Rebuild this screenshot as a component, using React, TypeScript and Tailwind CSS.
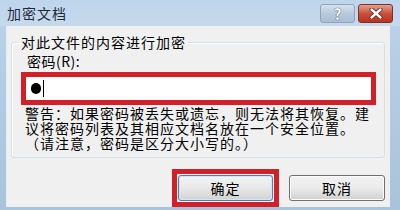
import React from 'react';

const font = { fontFamily: '"Noto Sans CJK SC", "Liberation Sans", sans-serif' };

const App: React.FC = () => {
    return (
        <div
            className="w-[400px] h-[210px] flex flex-col bg-gradient-to-b from-[#bcd3ea] to-[#a9c3da] text-black overflow-hidden"
            style={font}
        >
            {/* Title bar */}
            <div className="h-[27px] flex items-start justify-between pl-[7px] pr-[7px] bg-gradient-to-b from-[#bfd5ec] to-[#c6d9ed]">
                <span className="text-[14px] tracking-[1px] leading-[26px] text-[#1e2a36]">加密文档</span>
                <div className="flex gap-[3px] pt-[4px]">
                    <div className="w-[35px] h-[19px] rounded-[3px] border border-[#8ea4ba] bg-gradient-to-b from-[#d5e2ee] via-[#b8cadc] to-[#a9bfd4] flex items-center justify-center">
                        <span className="text-[15px] font-bold leading-none text-white [text-shadow:0_0_1px_#3a4e62,0_0_1px_#3a4e62]">?</span>
                    </div>
                    <div className="w-[35px] h-[19px] rounded-[3px] border border-[#7a3126] bg-gradient-to-b from-[#e3a08f] via-[#c9503c] to-[#b8321f] flex items-center justify-center">
                        <svg width="14" height="11" viewBox="0 0 14 11">
                            <path d="M2.5 1.5 L11.5 9.5 M11.5 1.5 L2.5 9.5" stroke="#5a1e14" strokeWidth="4" strokeLinecap="round" />
                            <path d="M2.5 1.5 L11.5 9.5 M11.5 1.5 L2.5 9.5" stroke="#ffffff" strokeWidth="2.4" strokeLinecap="round" />
                        </svg>
                    </div>
                </div>
            </div>

            {/* Client area */}
            <div className="flex-1 ml-[6px] mr-[10px] mb-[7px] bg-[#f0f0f0] border-l border-[#e4ecf4] flex flex-col px-[4px] pt-[7px]">
                <fieldset className="border border-[#d5dfe5] rounded-[3px] pl-[9px] pr-[5px] pb-[6px] mr-[1px] shadow-[inset_1px_1px_0_#ffffff]">
                    <legend className="-ml-[2px] px-[2px] text-[14px] tracking-[1px] leading-[18px]">对此文件的内容进行加密</legend>
                    <div className="text-[14px] tracking-[0.5px] leading-[16px] pl-[6px] mt-[2px]">密码(R):</div>
                    <div className="mt-[3px] h-[33px] border-[5px] border-[#d0212b] bg-white flex items-center pl-[5px] mr-[3px]">
                        <span className="w-[10px] h-[11px] rounded-full bg-black" />
                        <span className="ml-[2px] w-[1px] h-[17px] bg-black" />
                    </div>
                    <div className="text-[14px] tracking-[1px] leading-[15px] pl-[4px] mt-[1px] whitespace-nowrap">
                        <div>警告：如果密码被丢失或遗忘，则无法将其恢复。建</div>
                        <div>议将密码列表及其相应文档名放在一个安全位置。</div>
                        <div>（请注意，密码是区分大小写的。）</div>
                    </div>
                </fieldset>

                <div className="flex justify-end items-center gap-[10px] mt-[11px] pr-[1px]">
                    <div className="border-[5px] border-[#d0212b] p-[1px]">
                        <button className="w-[95px] h-[26px] rounded-[3px] border border-[#4d7fa8] bg-gradient-to-b from-[#f4f4f4] via-[#e8e8e8] to-[#d2d2d2] text-[14px] tracking-[1px] leading-none shadow-[inset_0_0_0_1px_#cfe6f5]">
                            确定
                        </button>
                    </div>
                    <button className="w-[96px] h-[26px] rounded-[3px] border border-[#707070] bg-gradient-to-b from-[#f2f2f2] via-[#ebebeb] to-[#cfcfcf] text-[14px] tracking-[1px] leading-none shadow-[inset_0_0_0_1px_#fcfcfc]">
                        取消
                    </button>
                </div>
            </div>
        </div>
    );
};

export default App;
